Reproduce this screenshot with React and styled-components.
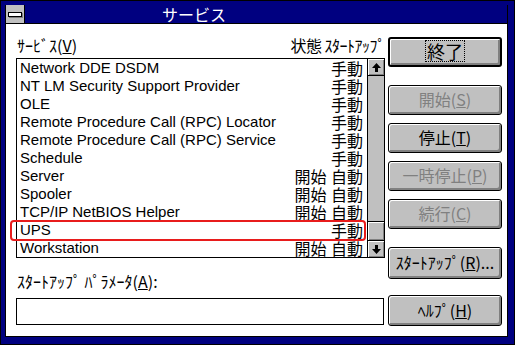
import React from 'react';
import styled, { createGlobalStyle } from 'styled-components';

const Global = createGlobalStyle`
  html, body { margin: 0; padding: 0; background: #000080; }
  body {
    font-family: "Liberation Sans", "Noto Sans CJK JP", sans-serif;
    font-size: 16px;
    color: #000;
  }
`;

const services = [
  ['Network DDE DSDM', '手動'],
  ['NT LM Security Support Provider', '手動'],
  ['OLE', '手動'],
  ['Remote Procedure Call (RPC) Locator', '手動'],
  ['Remote Procedure Call (RPC) Service', '手動'],
  ['Schedule', '手動'],
  ['Server', '開始 自動'],
  ['Spooler', '開始 自動'],
  ['TCP/IP NetBIOS Helper', '開始 自動'],
  ['UPS', '手動'],
  ['Workstation', '開始 自動'],
];

const Frame = styled.div`
  width: 515px;
  height: 345px;
  box-sizing: border-box;
  background: #000080;
  border: 1px solid #000;
  padding: 4px 6px 7px 4px;
  display: flex;
`;

const Window = styled.div`
  flex: 1;
  display: flex;
  flex-direction: column;
  background: #fff;
  border: 1px solid #000;
  border-top: none;
`;

const TitleBar = styled.div`
  height: 18px;
  display: flex;
  align-items: center;
  background: #000080;
  border-bottom: 1px solid #000;
`;

const SysMenu = styled.div`
  width: 18px;
  height: 18px;
  background: #c0c0c0;
  border-right: 1px solid #000;
  display: flex;
  align-items: center;
  justify-content: center;
  span {
    width: 12px;
    height: 3px;
    background: #fff;
    border: 1px solid #000;
    box-shadow: 1px 1px 0 #808080;
  }
`;

const Title = styled.div`
  color: #fff;
  font-family: "Noto Sans CJK JP", sans-serif;
  font-size: 16px;
  line-height: 18px;
  padding-left: 137px;
`;

const Body = styled.div`
  flex: 1;
  display: flex;
  padding: 13px 0 0 10px;
  gap: 3px;
`;

const LeftCol = styled.div`
  width: 369px;
  display: flex;
  flex-direction: column;
`;

const HeaderRow = styled.div`
  height: 17px;
  display: flex;
  justify-content: space-between;
  align-items: flex-end;
  font-family: "Noto Sans CJK JP", sans-serif;
  font-size: 16px;
  line-height: 17px;
  margin-bottom: 4px;
  padding-left: 1px;
  span:last-child { letter-spacing: -0.5px; }
`;

const Label = styled.div`
  font-family: "Noto Sans CJK JP", sans-serif;
  font-size: 16px;
  line-height: 16px;
  padding-left: 1px;
  margin: ${p => p.$mt || 0}px 0 ${p => p.$mb || 0}px;
`;

const ListBox = styled.div`
  position: relative;
  height: 200px;
  box-sizing: border-box;
  border: 1px solid #000;
  display: flex;
`;

const Rows = styled.div`
  flex: 1;
  overflow: hidden;
`;

const Row = styled.div`
  height: 18px;
  line-height: 18px;
  display: flex;
  justify-content: space-between;
  align-items: center;
  padding: 0 4px 0 3px;
  white-space: nowrap;
  font-size: 15px;
  span:last-child {
    font-family: "Noto Sans CJK JP", sans-serif;
    font-size: 16px;
    line-height: 18px;
    word-spacing: 1px;
  }
`;

const Highlight = styled.div`
  position: absolute;
  left: -7px;
  top: 161px;
  width: 352px;
  height: 17px;
  border: 2px solid #e81c1c;
  border-radius: 4px;
  pointer-events: none;
`;

const ScrollBar = styled.div`
  width: 16px;
  border-left: 1px solid #000;
  background: #c0c0c0;
  display: flex;
  flex-direction: column;
`;

const ArrowBox = styled.div`
  height: 17px;
  box-sizing: border-box;
  background: #c0c0c0;
  border-${p => (p.$down ? 'top' : 'bottom')}: 1px solid #000;
  box-shadow: inset 1px 1px 0 #fff, inset -1px -1px 0 #808080;
  display: flex;
  align-items: center;
  justify-content: center;
`;

const Track = styled.div`
  flex: 1;
  display: flex;
  flex-direction: column;
  justify-content: flex-end;
`;

const Thumb = styled.div`
  height: 19px;
  box-sizing: border-box;
  border-top: 1px solid #000;
  background: #c0c0c0;
  box-shadow: inset 1px 1px 0 #fff, inset -1px -1px 0 #808080;
`;

const Input = styled.div`
  height: 27px;
  box-sizing: border-box;
  border: 1px solid #000;
  width: 368px;
`;

const RightCol = styled.div`
  width: 114px;
  display: flex;
  flex-direction: column;
`;

const Button = styled.div`
  height: ${p => p.$h || 30}px;
  margin-top: ${p => p.$mt || 0}px;
  box-sizing: border-box;
  border: ${p => (p.$default ? 2 : 1)}px solid #000;
  border-radius: 3px;
  background: #c0c0c0;
  box-shadow: inset 1px 1px 0 #fff, inset -2px -2px 0 #808080;
  display: flex;
  align-items: center;
  justify-content: center;
  font-family: "Noto Sans CJK JP", sans-serif;
  font-size: ${p => p.$fs || 16}px;
  color: ${p => (p.$disabled ? '#808080' : '#000')};
  padding-bottom: 2px;
`;

const Focus = styled.span`
  outline: 1px dotted #000;
  outline-offset: 0;
  padding: 0 1px;
  line-height: 20px;
`;

const Arrow = ({ down }) => (
  <svg width="9" height="9" viewBox="0 0 9 9">
    <path
      d={down ? 'M3 0h3v4h3L4.5 9 0 4h3z' : 'M3 9h3V5h3L4.5 0 0 5h3z'}
      fill="#000"
    />
  </svg>
);

export default function App() {
  return (
    <>
      <Global />
      <Frame>
        <Window>
          <TitleBar>
            <SysMenu><span /></SysMenu>
            <Title>サービス</Title>
          </TitleBar>
          <Body>
            <LeftCol>
              <HeaderRow>
                <span>ｻｰﾋﾞｽ(<u>V</u>)</span>
                <span>状態 ｽﾀｰﾄｱｯﾌﾟ</span>
              </HeaderRow>
              <ListBox>
                <Rows>
                  {services.map(([name, state]) => (
                    <Row key={name}>
                      <span>{name}</span>
                      <span>{state}</span>
                    </Row>
                  ))}
                </Rows>
                <ScrollBar>
                  <ArrowBox><Arrow /></ArrowBox>
                  <Track>
                    <Thumb />
                  </Track>
                  <ArrowBox $down><Arrow down /></ArrowBox>
                </ScrollBar>
                <Highlight />
              </ListBox>
              <Label $mt={15} $mb={9}>ｽﾀｰﾄｱｯﾌﾟ ﾊﾟﾗﾒｰﾀ(<u>A</u>):</Label>
              <Input />
            </LeftCol>
            <RightCol>
              <Button $default $mt={0} $fs={18}><Focus>終了</Focus></Button>
              <Button $disabled $mt={18}>開始(<u>S</u>)</Button>
              <Button $mt={8}>停止(<u>T</u>)</Button>
              <Button $disabled $mt={8}>一時停止(<u>P</u>)</Button>
              <Button $disabled $mt={8}>続行(<u>C</u>)</Button>
              <Button $mt={18} $h={32}>ｽﾀｰﾄｱｯﾌﾟ(<u>R</u>)...</Button>
              <Button $mt={16} $h={31}>ﾍﾙﾌﾟ(<u>H</u>)</Button>
            </RightCol>
          </Body>
        </Window>
      </Frame>
    </>
  );
}
